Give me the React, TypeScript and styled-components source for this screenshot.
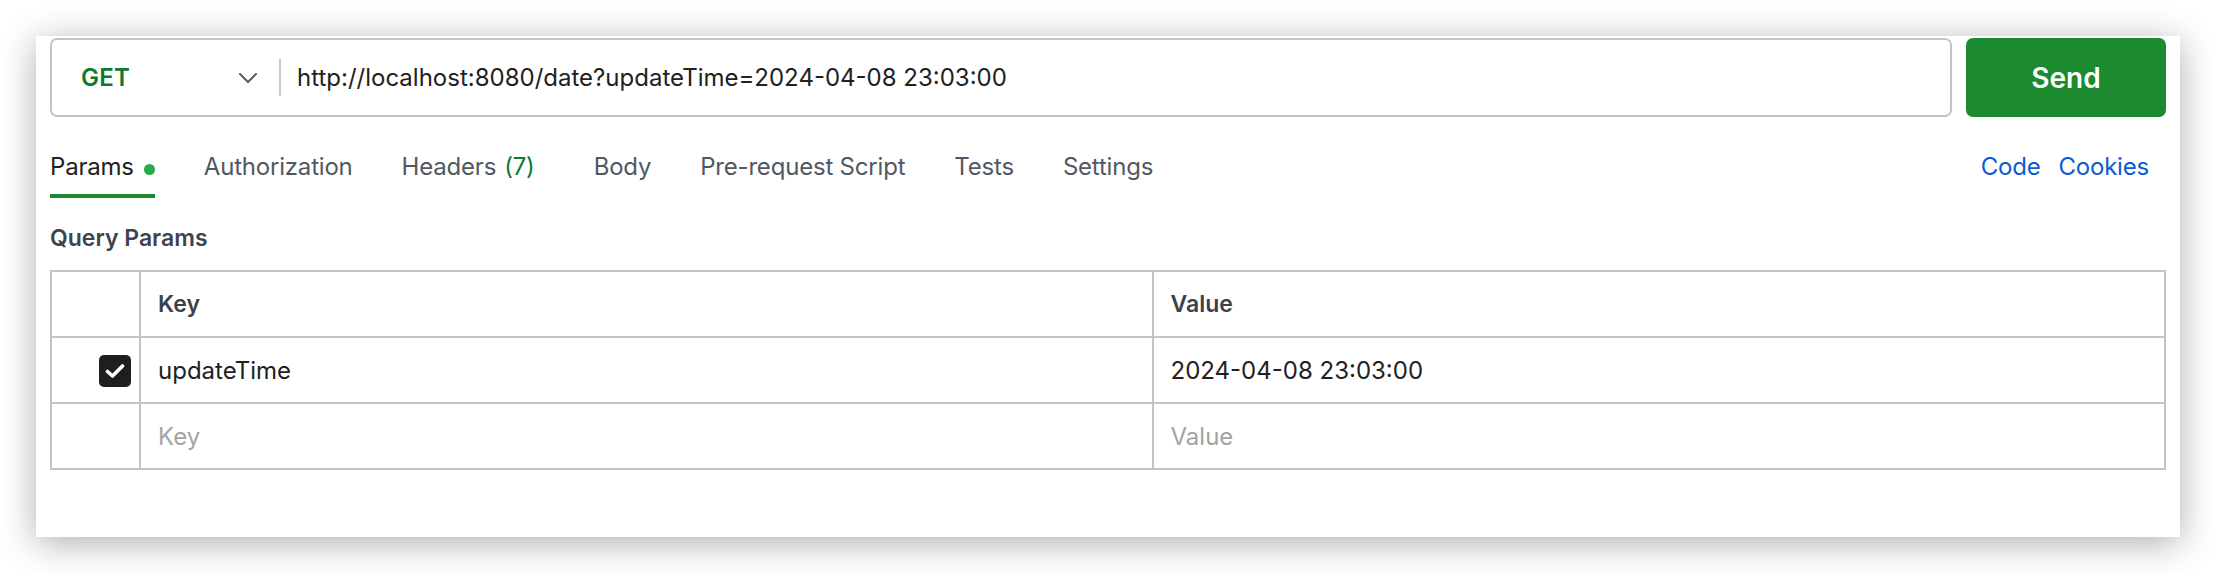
import React from "react";
import styled, { createGlobalStyle } from "styled-components";

const GlobalStyle = createGlobalStyle`
  html, body {
    margin: 0;
    padding: 0;
    background: #ffffff;
  }
  body {
    font-family: Inter, "Noto Sans", "Liberation Sans", sans-serif;
    -webkit-font-smoothing: antialiased;
  }
  * { box-sizing: border-box; }
`;

const Page = styled.div`
  padding: 36px 0 0 36px;
  height: 574px;
`;

const Card = styled.div`
  width: 2144px;
  height: 501px;
  background: #ffffff;
  box-shadow: 0 6px 34px rgba(0, 0, 0, 0.32);
  padding: 2px 14px 0;
  display: flex;
  flex-direction: column;
`;

const TopBar = styled.div`
  display: flex;
  gap: 14px;
  height: 79px;
`;

const UrlBox = styled.div`
  flex: 1;
  display: flex;
  align-items: center;
  border: 2px solid #c4c4c4;
  border-radius: 7px;
`;

const MethodSelect = styled.div`
  width: 227px;
  display: flex;
  align-items: center;
  justify-content: space-between;
  padding: 0 22px 0 29px;
`;

const MethodText = styled.span`
  font-size: 24px;
  font-weight: 600;
  color: #0e7a2e;
  letter-spacing: 0.2px;
`;

const Divider = styled.div`
  width: 2px;
  height: 37px;
  background: #cacaca;
`;

const UrlText = styled.div`
  margin-left: 16px;
  font-size: 24px;
  color: #212121;
`;

const SendButton = styled.button`
  width: 200px;
  border: none;
  border-radius: 7px;
  background: #1c8a2e;
  color: #ffffff;
  font-family: inherit;
  font-size: 28px;
  font-weight: 600;
  padding: 0;
`;

const TabsRow = styled.div`
  margin-top: 35px;
  display: flex;
  justify-content: space-between;
  align-items: flex-start;
`;

const TabList = styled.div`
  display: flex;
  gap: 49px;
`;

const Tab = styled.div<{ $active?: boolean }>`
  display: flex;
  align-items: center;
  font-size: 24px;
  line-height: 30px;
  letter-spacing: -0.2px;
  padding-bottom: 12px;
  color: ${(p) => (p.$active ? "#212121" : "#525862")};
  border-bottom: 4px solid ${(p) => (p.$active ? "#1c8a2e" : "transparent")};
`;

const Dot = styled.span`
  width: 11px;
  height: 11px;
  border-radius: 50%;
  background: #22ad48;
  margin-left: 10px;
  margin-top: 4px;
`;

const Count = styled.span`
  color: #0e7a2e;
  margin-left: 8px;
  margin-right: 10px;
`;

const LinkGroup = styled.div`
  display: flex;
  gap: 18px;
  margin-right: 17px;
`;

const Link = styled.a`
  font-size: 24px;
  line-height: 30px;
  letter-spacing: -0.2px;
  color: #0b5bd3;
  text-decoration: none;
`;

const SectionTitle = styled.div`
  margin-top: 25px;
  font-size: 23px;
  line-height: 30px;
  font-weight: 600;
  color: #3d444e;
`;

const Table = styled.div`
  margin-top: 17px;
  border: 2px solid #c4c4c4;
  display: flex;
  flex-direction: column;
`;

const Row = styled.div`
  display: grid;
  grid-template-columns: 87px 1fr 1fr;
  height: 64px;
  & + & {
    border-top: 2px solid #c4c4c4;
    height: 66px;
  }
`;

const Cell = styled.div<{ $header?: boolean; $placeholder?: boolean }>`
  display: flex;
  align-items: center;
  padding-left: 17px;
  border-left: 2px solid #c4c4c4;
  font-size: ${(p) => (p.$header ? "23px" : "24px")};
  font-weight: ${(p) => (p.$header ? 600 : 400)};
  color: ${(p) => (p.$header ? "#3b424c" : p.$placeholder ? "#a3a3a3" : "#212121")};
`;

const CheckCell = styled.div`
  display: flex;
  align-items: center;
  justify-content: flex-end;
  padding-right: 8px;
  padding-top: 2px;
`;

const CheckBox = styled.span`
  width: 32px;
  height: 32px;
  border-radius: 5px;
  background: #1e1e1e;
  display: flex;
  align-items: center;
  justify-content: center;
`;

const Chevron = () => (
  <svg width="18" height="10" viewBox="0 0 18 10" fill="none">
    <polyline points="1,1 9,9 17,1" stroke="#555b63" strokeWidth="2" strokeLinecap="round" strokeLinejoin="round" />
  </svg>
);

const Check = () => (
  <svg width="20" height="16" viewBox="0 0 20 16" fill="none">
    <polyline points="2.5,8.5 7.5,13 17.5,3" stroke="#ffffff" strokeWidth="3.6" strokeLinecap="round" strokeLinejoin="round" />
  </svg>
);

export default function App() {
  return (
    <>
      <GlobalStyle />
      <Page>
        <Card>
          <TopBar>
            <UrlBox>
              <MethodSelect>
                <MethodText>GET</MethodText>
                <Chevron />
              </MethodSelect>
              <Divider />
              <UrlText>http://localhost:8080/date?updateTime=2024-04-08 23:03:00</UrlText>
            </UrlBox>
            <SendButton>Send</SendButton>
          </TopBar>

          <TabsRow>
            <TabList>
              <Tab $active>
                Params
                <Dot />
              </Tab>
              <Tab>Authorization</Tab>
              <Tab>
                Headers<Count>(7)</Count>
              </Tab>
              <Tab>Body</Tab>
              <Tab>Pre-request Script</Tab>
              <Tab>Tests</Tab>
              <Tab>Settings</Tab>
            </TabList>
            <LinkGroup>
              <Link>Code</Link>
              <Link>Cookies</Link>
            </LinkGroup>
          </TabsRow>

          <SectionTitle>Query Params</SectionTitle>

          <Table>
            <Row>
              <CheckCell />
              <Cell $header>Key</Cell>
              <Cell $header>Value</Cell>
            </Row>
            <Row>
              <CheckCell>
                <CheckBox>
                  <Check />
                </CheckBox>
              </CheckCell>
              <Cell>updateTime</Cell>
              <Cell>2024-04-08 23:03:00</Cell>
            </Row>
            <Row>
              <CheckCell />
              <Cell $placeholder>Key</Cell>
              <Cell $placeholder>Value</Cell>
            </Row>
          </Table>
        </Card>
      </Page>
    </>
  );
}
